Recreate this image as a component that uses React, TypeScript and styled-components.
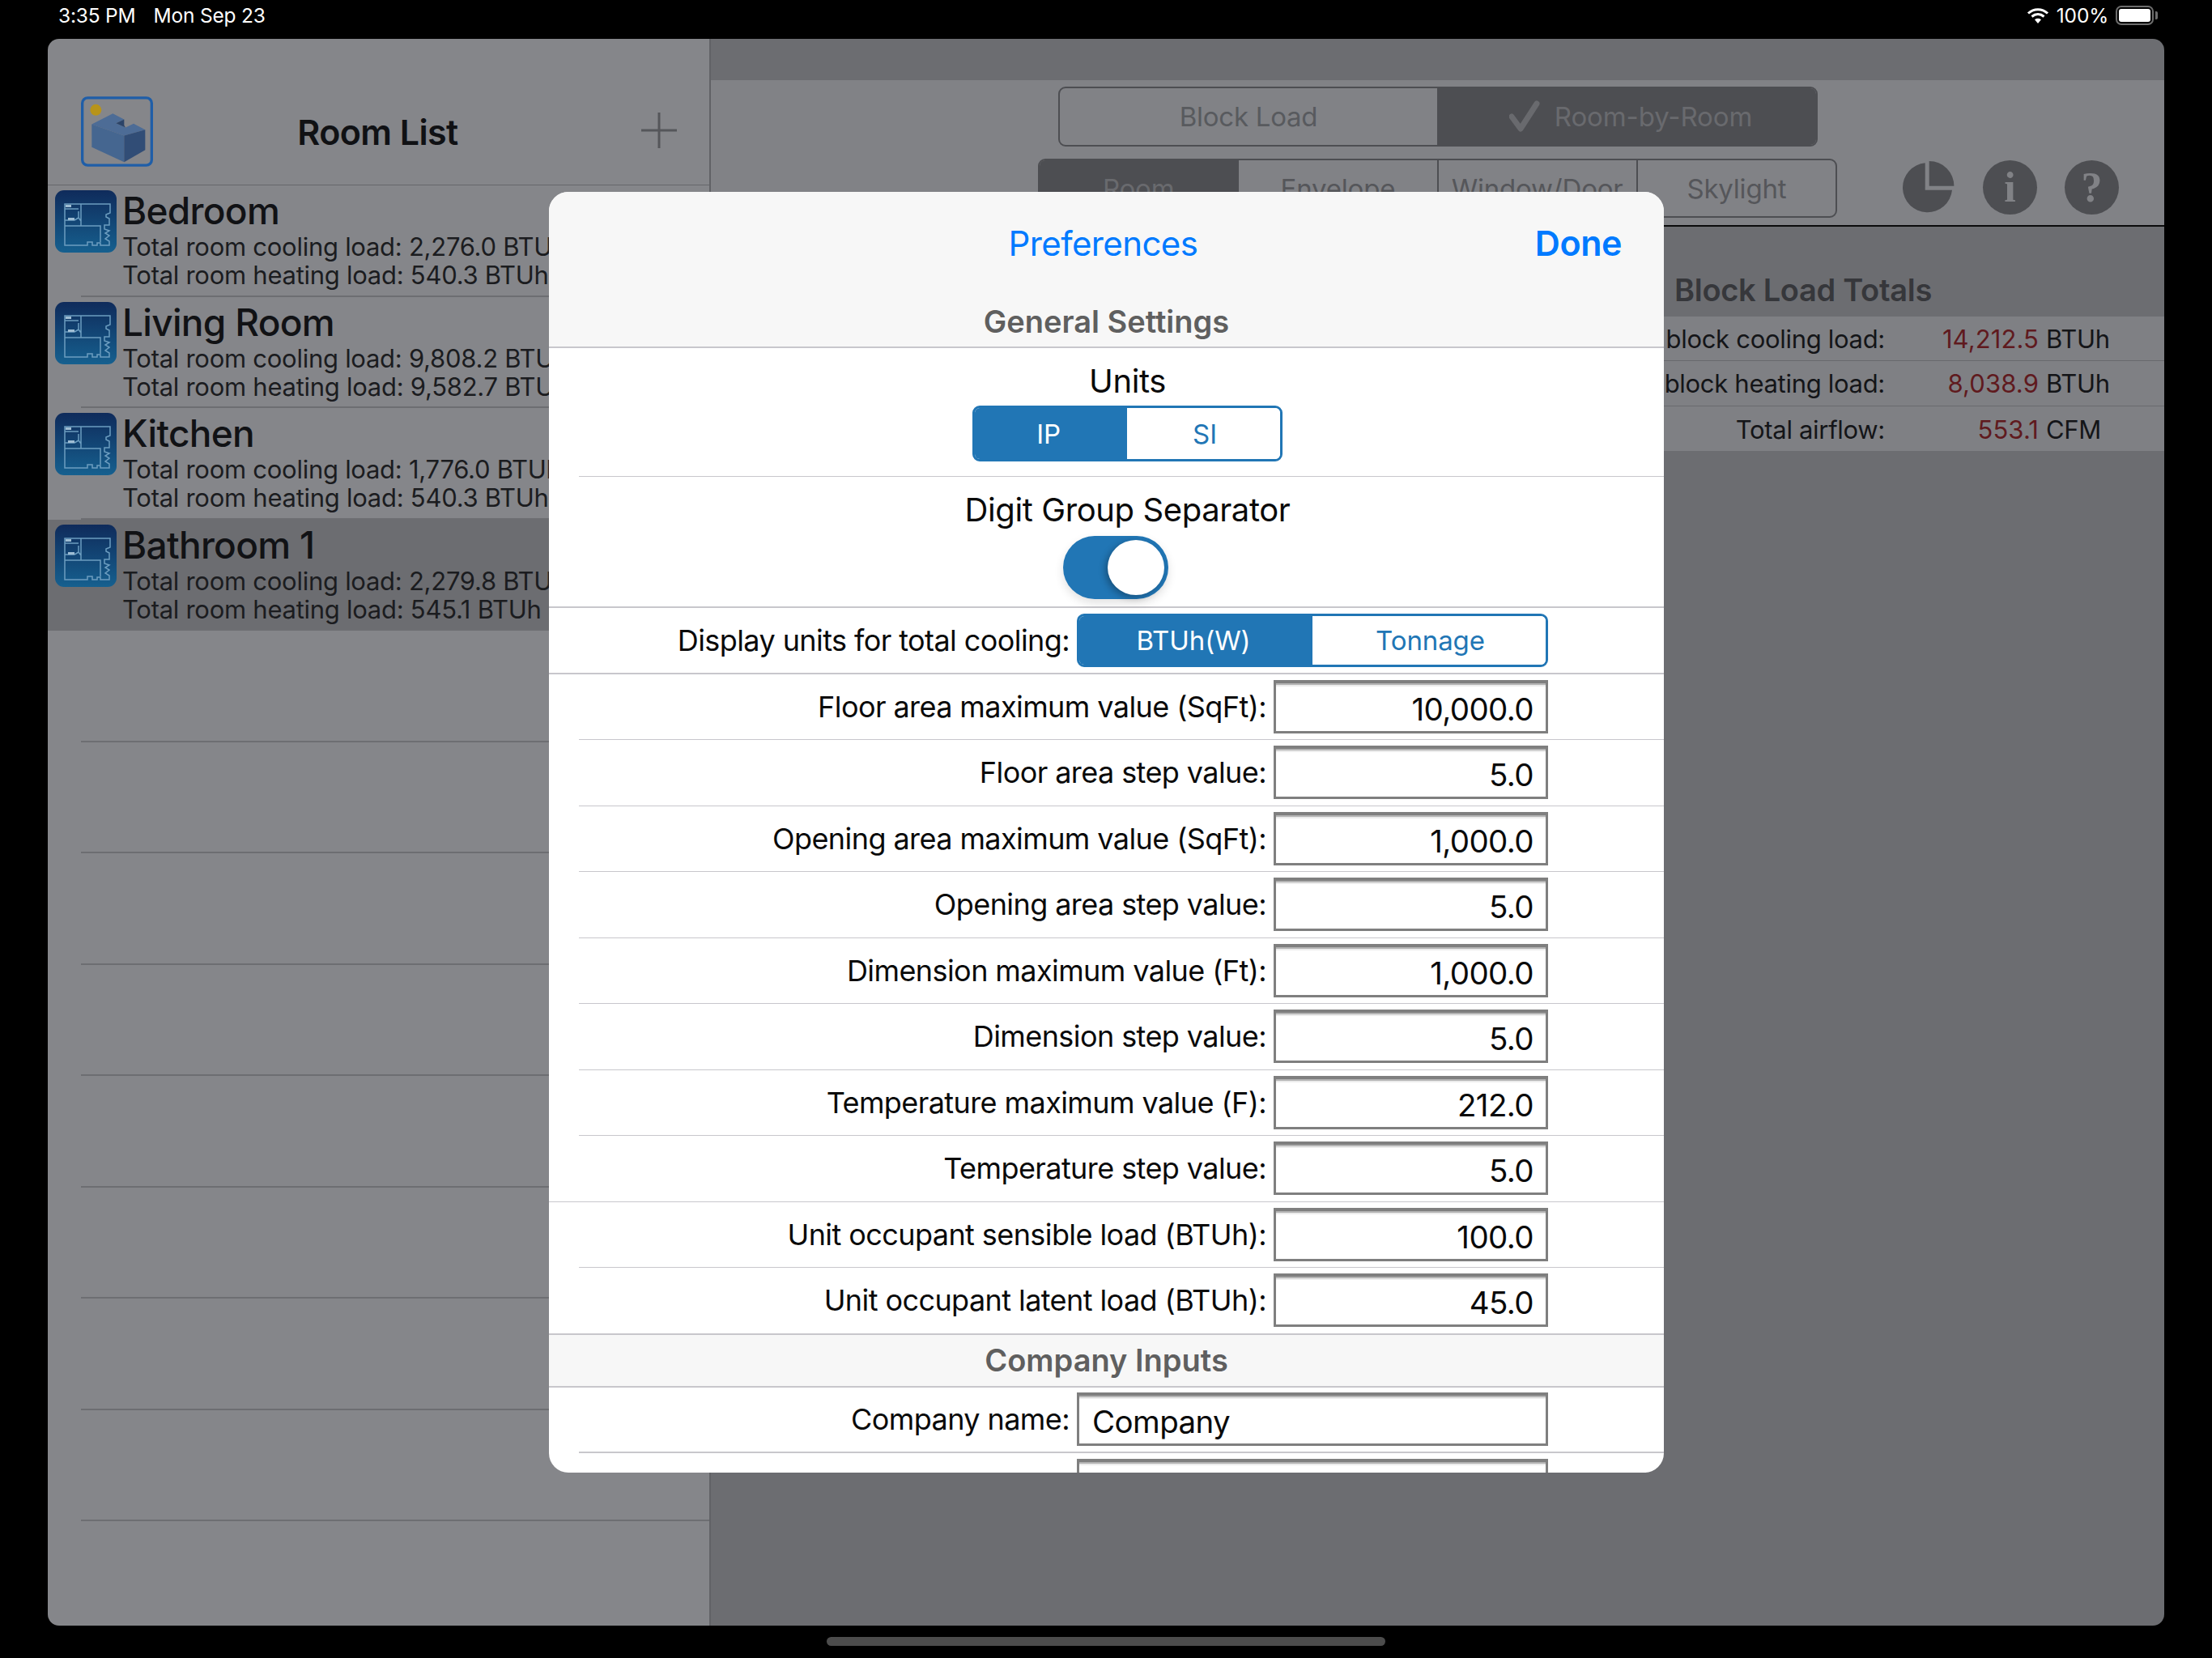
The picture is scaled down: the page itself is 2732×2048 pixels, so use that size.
import React from "react";
import styled, { createGlobalStyle } from "styled-components";

const GlobalStyle = createGlobalStyle`
  html, body {
    margin: 0;
    padding: 0;
    background: #000;
  }
  * {
    box-sizing: border-box;
  }
  body {
    font-family: Inter, "Liberation Sans", sans-serif;
  }
`;

const BLUE = "#2176b5";
const DIM_PANEL = "#85868a";
const DIM_PANE = "#6c6d71";
const DIM_CONTROL = "#4d4e52";
const LINE = "#c8c7cc";

const Page = styled.div`
  position: relative;
  width: 2732px;
  height: 2048px;
  background: #000;
  overflow: hidden;
  display: flex;
  flex-direction: column;
`;

const StatusBar = styled.div`
  height: 48px;
  display: flex;
  align-items: center;
  padding: 0 72px 10px 72px;
  color: #fff;
  font-size: 24.5px;
  letter-spacing: -0.2px;
`;

const StatusDate = styled.span`
  margin-left: 22px;
`;

const StatusRight = styled.div`
  margin-left: auto;
  display: flex;
  align-items: center;
  gap: 9px;
`;

const Battery = styled.div`
  position: relative;
  width: 47px;
  height: 24px;
  border: 2px solid #6d6d6d;
  border-radius: 7px;
  padding: 2px;
  &::before {
    content: "";
    display: block;
    height: 100%;
    background: #fff;
    border-radius: 3px;
  }
  &::after {
    content: "";
    position: absolute;
    right: -7px;
    top: 5px;
    width: 3px;
    height: 10px;
    background: #6d6d6d;
    border-radius: 0 2px 2px 0;
  }
`;

const AppFrame = styled.div`
  height: 1960px;
  margin: 0 59px;
  border-radius: 14px;
  overflow: hidden;
  display: flex;
`;

const Sidebar = styled.div`
  width: 819px;
  background: ${DIM_PANEL};
  border-right: 2px solid #616266;
  display: flex;
  flex-direction: column;
`;

const SidebarHeader = styled.div`
  height: 181px;
  padding: 71px 40px 23px 41px;
  border-bottom: 1px solid #66676b;
  display: flex;
  align-items: flex-start;
`;

const LogoFrame = styled.svg`
  width: 89px;
  height: 87px;
  flex: none;
`;

const SidebarTitle = styled.div`
  flex: 1;
  text-align: center;
  font-size: 43px;
  font-weight: 600;
  line-height: 52px;
  margin-top: 18px;
  padding-right: 48px;
  letter-spacing: -0.6px;
  color: #101114;
`;

const AddIcon = styled.svg`
  width: 44px;
  height: 44px;
  flex: none;
  margin-top: 20px;
`;

const RoomRow = styled.div<{ $selected?: boolean }>`
  height: 137.5px;
  padding: 6px 0 0 9px;
  display: flex;
  gap: 7px;
  background:
    linear-gradient(#6d6e72, #6d6e72) no-repeat left 41px bottom / calc(100% - 41px) 2px,
    ${(p) => (p.$selected ? DIM_PANE : "transparent")};
`;

const RoomThumb = styled.svg`
  width: 76px;
  height: 77px;
  flex: none;
`;

const RoomText = styled.div`
  display: flex;
  flex-direction: column;
  white-space: nowrap;
  color: #111215;
`;

const RoomName = styled.div`
  font-size: 46px;
  font-weight: 500;
  line-height: 54px;
  margin-top: -2px;
  letter-spacing: -0.7px;
`;

const RoomLoad = styled.div`
  font-size: 31px;
  line-height: 35px;
  letter-spacing: -0.27px;
  color: #1b1c1f;
`;

const Pane = styled.div`
  flex: 1;
  background: ${DIM_PANE};
  display: flex;
  flex-direction: column;
`;

const Controls = styled.div`
  margin-top: 51px;
  height: 181px;
  background: #818286;
  border-bottom: 2px solid #0b0b0c;
  padding-top: 8px;
  display: flex;
  flex-direction: column;
  gap: 15px;
`;

const ModeSwitch = styled.div`
  width: 938px;
  height: 74px;
  margin-left: 429px;
  display: grid;
  grid-template-columns: 466px 1fr;
  border: 2px solid ${DIM_CONTROL};
  border-radius: 9px;
  overflow: hidden;
`;

const ModeOption = styled.div<{ $on?: boolean }>`
  display: flex;
  align-items: center;
  justify-content: center;
  gap: 18px;
  padding-left: ${(p) => (p.$on ? 10 : 0)}px;
  font-size: 33px;
  letter-spacing: ${(p) => (p.$on ? -0.1 : -0.25)}px;
  color: ${(p) => (p.$on ? "#696a6e" : "#585a5e")};
  background: ${(p) => (p.$on ? DIM_CONTROL : "transparent")};
`;

const TabsLine = styled.div`
  display: flex;
  align-items: flex-start;
  margin-left: 404px;
`;

const Tabs = styled.div`
  width: 987px;
  height: 73px;
  display: flex;
  border: 2px solid ${DIM_CONTROL};
  border-radius: 9px;
  overflow: hidden;
`;

const Tab = styled.div<{ $on?: boolean }>`
  flex: 1;
  display: flex;
  align-items: center;
  justify-content: center;
  font-size: 33px;
  letter-spacing: -0.2px;
  color: ${(p) => (p.$on ? "#696a6e" : "#55565a")};
  background: ${(p) => (p.$on ? DIM_CONTROL : "transparent")};
  & + & {
    border-left: 2px solid ${DIM_CONTROL};
  }
`;

const PaneIcons = styled.div`
  margin-left: 80px;
  margin-top: 2px;
  display: flex;
  gap: 34px;
`;

const PieIcon = styled.svg`
  width: 66px;
  height: 67px;
`;

const RoundIcon = styled.div`
  width: 67px;
  height: 67px;
  border-radius: 50%;
  background: ${DIM_CONTROL};
  color: #818286;
  font-family: "Liberation Serif", serif;
  font-weight: 700;
  font-size: 52px;
  line-height: 67px;
  text-align: center;
`;

const TotalsTitle = styled.div`
  height: 111px;
  padding: 55px 0 0 1190px;
  font-size: 38px;
  font-weight: 600;
  line-height: 46px;
  letter-spacing: -0.3px;
  color: #36373b;
  white-space: nowrap;
`;

const TotalsTable = styled.div`
  display: flex;
  flex-direction: column;
`;

const TotalsRow = styled.div`
  height: 55.3px;
  background: #7f8084;
  border-bottom: 1px solid #68696d;
  display: flex;
  align-items: center;
  font-size: 31px;
  letter-spacing: -0.3px;
  color: #141518;
  white-space: nowrap;
  &:last-child {
    border-bottom: none;
    padding-top: 2px;
  }
`;

const TotalsLabel = styled.div`
  width: 1450px;
  text-align: right;
`;

const TotalsValue = styled.div`
  width: 190px;
  text-align: right;
  color: #5f1a1e;
  letter-spacing: 0.1px;
`;

const TotalsUnit = styled.div`
  margin-left: 9px;
`;

const HomeArea = styled.div`
  flex: 1;
  display: flex;
  justify-content: center;
  padding-top: 14px;
`;

const HomeBar = styled.div`
  width: 690px;
  height: 11px;
  border-radius: 6px;
  background: #4c4c4c;
`;

/* form sheet floating over the dimmed app */
const Sheet = styled.div`
  position: absolute;
  left: 678px;
  top: 237px;
  width: 1377px;
  height: 1582px;
  border-radius: 24px;
  overflow: hidden;
  background: #fff;
  color: #0a0a0a;
`;

const SheetNav = styled.div`
  height: 124px;
  background: #f7f7f7;
  display: grid;
  grid-template-columns: 1fr auto;
  align-items: center;
  padding: 0 52px 0 0;
  color: #007aff;
`;

const NavTitle = styled.div`
  text-align: center;
  padding-left: 151px;
  margin-top: 2px;
  font-size: 42px;
  letter-spacing: -0.6px;
`;

const NavDone = styled.div`
  font-size: 43px;
  letter-spacing: -0.45px;
  font-weight: 600;
  margin-top: 2px;
`;

const SectionHeader = styled.div<{ $first?: boolean }>`
  height: ${(p) => (p.$first ? 69 : 66)}px;
  background: #f7f7f7;
  display: flex;
  align-items: center;
  justify-content: center;
  padding-top: ${(p) => (p.$first ? 4 : 0)}px;
  border-top: ${(p) => (p.$first ? "none" : `1px solid ${LINE}`)};
  border-bottom: 2px solid ${LINE};
  font-size: 38px;
  font-weight: 600;
  letter-spacing: 0;
  color: #5f5f5f;
`;

const StackRow = styled.div<{ $height: number; $inset?: boolean }>`
  height: ${(p) => p.$height}px;
  margin-left: ${(p) => (p.$inset ? 37 : 0)}px;
  padding-left: ${(p) => (p.$inset ? 15 : 52)}px;
  border-bottom: ${(p) => (p.$inset ? 1 : 2)}px solid ${LINE};
  display: flex;
  flex-direction: column;
  align-items: center;
`;

const StackLabel = styled.div`
  font-size: 40px;
  letter-spacing: -0.4px;
  line-height: 48px;
  margin-top: 17px;
`;

const FormRow = styled.div<{ $inset?: boolean; $strong?: boolean }>`
  height: 81.5px;
  margin-left: ${(p) => (p.$inset ? 37 : 0)}px;
  padding-right: 143px;
  border-bottom: ${(p) => (p.$strong ? 2 : 1)}px solid ${LINE};
  display: flex;
  align-items: center;
  justify-content: flex-end;
  gap: 9px;
`;

const FormLabel = styled.div`
  font-size: 36px;
  letter-spacing: -0.58px;
  white-space: nowrap;
`;

const Field = styled.div<{ $width: number; $left?: boolean }>`
  width: ${(p) => p.$width}px;
  height: 66px;
  flex: none;
  border: 3px solid #7f7f7f;
  border-top-width: 4px;
  box-shadow: inset 0 2px 0 #b4b4b4, inset 0 4px 0 #ececec;
  padding: 4px 15px 0 16px;
  font-size: 38.5px;
  line-height: 56px;
  letter-spacing: -0.6px;
  text-align: ${(p) => (p.$left ? "left" : "right")};
  white-space: nowrap;
`;

const Segments = styled.div<{ $width: number; $height: number; $split: number; $top?: number }>`
  width: ${(p) => p.$width}px;
  height: ${(p) => p.$height}px;
  flex: none;
  margin-top: ${(p) => p.$top ?? 0}px;
  display: grid;
  grid-template-columns: ${(p) => p.$split}px 1fr;
  border: 3px solid ${BLUE};
  border-radius: 9px;
  overflow: hidden;
`;

const Segment = styled.div<{ $on?: boolean }>`
  display: flex;
  align-items: center;
  justify-content: center;
  padding: ${(p) => (p.$on ? "0 6px 0 0" : "0 0 0 3px")};
  font-size: 33px;
  letter-spacing: -0.1px;
  background: ${(p) => (p.$on ? BLUE : "#fff")};
  color: ${(p) => (p.$on ? "#fff" : BLUE)};
`;

const Toggle = styled.div`
  width: 130px;
  height: 78px;
  margin: 8px 30px 0 0;
  border-radius: 39px;
  background: ${BLUE};
  padding: 5px 5px 0 55px;
  box-shadow: 0 5px 12px rgba(0, 0, 0, 0.12);
`;

const ToggleKnob = styled.div`
  width: 70px;
  height: 68px;
  border-radius: 50%;
  background: #fff;
  box-shadow: -3px 3px 8px rgba(0, 0, 0, 0.3);
`;

const floorRows = [
  { label: "Floor area maximum value (SqFt):", value: "10,000.0" },
  { label: "Floor area step value:", value: "5.0" },
  { label: "Opening area maximum value (SqFt):", value: "1,000.0" },
  { label: "Opening area step value:", value: "5.0" },
  { label: "Dimension maximum value (Ft):", value: "1,000.0" },
  { label: "Dimension step value:", value: "5.0" },
  { label: "Temperature maximum value (F):", value: "212.0" },
  { label: "Temperature step value:", value: "5.0" },
];

const occupantRows = [
  { label: "Unit occupant sensible load (BTUh):", value: "100.0" },
  { label: "Unit occupant latent load (BTUh):", value: "45.0" },
];

const rooms = [
  { name: "Bedroom", cooling: "2,276.0", heating: "540.3" },
  { name: "Living Room", cooling: "9,808.2", heating: "9,582.7" },
  { name: "Kitchen", cooling: "1,776.0", heating: "540.3" },
  { name: "Bathroom 1", cooling: "2,279.8", heating: "545.1" },
];

function FloorPlan({ id }: { id: string }) {
  return (
    <RoomThumb viewBox="0 0 76 77">
      <defs>
        <linearGradient id={id} x1="0" y1="0" x2="0" y2="1">
          <stop offset="0" stopColor="#0f2b5b" />
          <stop offset="1" stopColor="#16608f" />
        </linearGradient>
      </defs>
      <rect width="76" height="77" rx="11" fill={`url(#${id})`} />
      <g fill="none" stroke="#6c9dc0" strokeWidth="1.5">
        <path d="M12 17H68V28L63 30V33L67 35V43H61V48L67 50L62 53L67 56L62 60L67 63V68H56V65H52V68H46V64H40V68H12V17Z" />
        <path d="M32 17V44H56V64M12 44H32M12 23H29M12 37H24M29 26V34L32 38M24 37L29 34" />
      </g>
      <path d="M13 18H20V21H13ZM16 34H24V37H16Z" fill="#9fbdd3" />
    </RoomThumb>
  );
}

function App() {
  return (
    <Page>
      <GlobalStyle />
      <StatusBar>
        <span>3:35 PM</span>
        <StatusDate>Mon Sep 23</StatusDate>
        <StatusRight>
          <svg width="28" height="22" viewBox="0 0 28 22">
            <g fill="none" stroke="#fff" strokeWidth="3">
              <path d="M2 8.5C9 2 19 2 26 8.5" />
              <path d="M6.5 12.5C11 8.6 17 8.6 21.5 12.5" />
            </g>
            <path d="M10 16.2C12.4 14.4 15.6 14.4 18 16.2L14 21Z" fill="#fff" />
          </svg>
          <span>100%</span>
          <Battery />
        </StatusRight>
      </StatusBar>

      <AppFrame>
        <Sidebar>
          <SidebarHeader>
            <LogoFrame viewBox="30 27 267 260">
              <rect x="35" y="32" width="257" height="250" rx="20" fill="none" stroke="#1f5ea8" strokeWidth="10" />
              <circle cx="85" cy="77" r="21" fill="#b8941a" />
              <path d="M70 130L148 90L190 112L160 126L195 142L225 128L268 150L190 172Z" fill="#4d6c96" />
              <path d="M160 126L190 112V134L195 142Z" fill="#2c4468" />
              <path d="M70 130L190 172V270L70 215Z" fill="#456690" />
              <path d="M190 172L268 150V225L190 270Z" fill="#314d76" />
            </LogoFrame>
            <SidebarTitle>Room List</SidebarTitle>
            <AddIcon viewBox="0 0 44 44">
              <path d="M22 0V44M0 22H44" stroke="#55565a" strokeWidth="3" fill="none" />
            </AddIcon>
          </SidebarHeader>
          {rooms.map((room, i) => (
            <RoomRow key={room.name} $selected={i === 3}>
              <FloorPlan id={`plan-${i}`} />
              <RoomText>
                <RoomName>{room.name}</RoomName>
                <RoomLoad>Total room cooling load: {room.cooling} BTUh</RoomLoad>
                <RoomLoad>Total room heating load: {room.heating} BTUh</RoomLoad>
              </RoomText>
            </RoomRow>
          ))}
          {Array.from({ length: 8 }).map((_, i) => (
            <RoomRow key={i} />
          ))}
        </Sidebar>

        <Pane>
          <Controls>
            <ModeSwitch>
              <ModeOption>Block Load</ModeOption>
              <ModeOption $on>
                <svg width="38" height="40" viewBox="0 0 38 40">
                  <path d="M3 20L14 35L34 4" fill="none" stroke="#696a6e" strokeWidth="7" strokeLinecap="round" strokeLinejoin="round" />
                </svg>
                Room-by-Room
              </ModeOption>
            </ModeSwitch>
            <TabsLine>
              <Tabs>
                <Tab $on>Room</Tab>
                <Tab>Envelope</Tab>
                <Tab>Window/Door</Tab>
                <Tab>Skylight</Tab>
              </Tabs>
              <PaneIcons>
                <PieIcon viewBox="8 10 66 67">
                  <path d="M36.7 13.2A30.6 30.6 0 1 0 70 46.7H36.7Z" fill={DIM_CONTROL} />
                  <path d="M41.7 11A30.7 30.7 0 0 1 72.4 41.7H41.7Z" fill={DIM_CONTROL} />
                </PieIcon>
                <RoundIcon>i</RoundIcon>
                <RoundIcon>?</RoundIcon>
              </PaneIcons>
            </TabsLine>
          </Controls>
          <TotalsTitle>Block Load Totals</TotalsTitle>
          <TotalsTable>
            <TotalsRow>
              <TotalsLabel>Total block cooling load:</TotalsLabel>
              <TotalsValue>14,212.5</TotalsValue>
              <TotalsUnit>BTUh</TotalsUnit>
            </TotalsRow>
            <TotalsRow>
              <TotalsLabel>Total block heating load:</TotalsLabel>
              <TotalsValue>8,038.9</TotalsValue>
              <TotalsUnit>BTUh</TotalsUnit>
            </TotalsRow>
            <TotalsRow>
              <TotalsLabel>Total airflow:</TotalsLabel>
              <TotalsValue>553.1</TotalsValue>
              <TotalsUnit>CFM</TotalsUnit>
            </TotalsRow>
          </TotalsTable>
        </Pane>
      </AppFrame>

      <HomeArea>
        <HomeBar />
      </HomeArea>

      <Sheet>
        <SheetNav>
          <NavTitle>Preferences</NavTitle>
          <NavDone>Done</NavDone>
        </SheetNav>
        <SectionHeader $first>General Settings</SectionHeader>
        <StackRow $height={159} $inset>
          <StackLabel>Units</StackLabel>
          <Segments $width={383} $height={69} $split={188} $top={6}>
            <Segment $on>IP</Segment>
            <Segment>SI</Segment>
          </Segments>
        </StackRow>
        <StackRow $height={162}>
          <StackLabel>Digit Group Separator</StackLabel>
          <Toggle>
            <ToggleKnob />
          </Toggle>
        </StackRow>
        <FormRow $strong>
          <FormLabel>Display units for total cooling:</FormLabel>
          <Segments $width={582} $height={66} $split={288}>
            <Segment $on>BTUh(W)</Segment>
            <Segment>Tonnage</Segment>
          </Segments>
        </FormRow>
        {floorRows.map((row, i) => (
          <FormRow key={row.label} $inset={i < floorRows.length - 1}>
            <FormLabel>{row.label}</FormLabel>
            <Field $width={339}>{row.value}</Field>
          </FormRow>
        ))}
        {occupantRows.map((row, i) => (
          <FormRow key={row.label} $inset={i === 0}>
            <FormLabel>{row.label}</FormLabel>
            <Field $width={339}>{row.value}</Field>
          </FormRow>
        ))}
        <SectionHeader>Company Inputs</SectionHeader>
        <FormRow $inset $strong>
          <FormLabel>Company name:</FormLabel>
          <Field $width={582} $left>Company</Field>
        </FormRow>
        <FormRow $inset>
          <Field $width={582} $left />
        </FormRow>
      </Sheet>
    </Page>
  );
}

export default App;
